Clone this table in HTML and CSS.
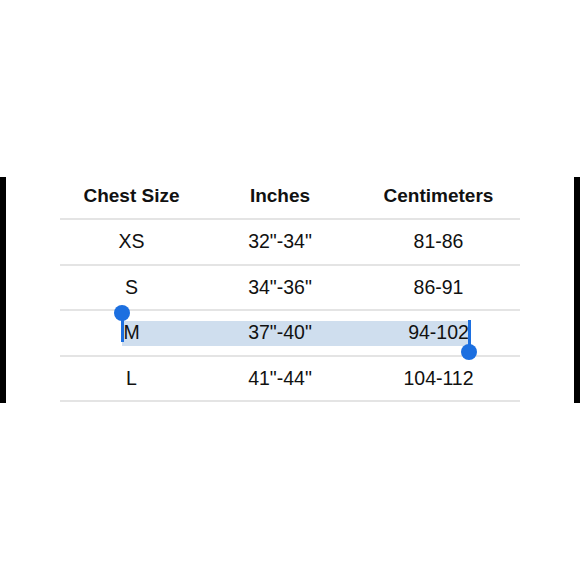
FILE: index.html
```html
<!DOCTYPE html>
<html>
<head>
<meta charset="utf-8">
<link rel="stylesheet" href="styles.css">
</head>
<body>
<div class="screen">
  <div class="bar"></div>
  <div class="chart">
    <div class="row head">
      <div class="cell">Chest Size</div>
      <div class="cell">Inches</div>
      <div class="cell">Centimeters</div>
    </div>
    <div class="row">
      <div class="cell">XS</div>
      <div class="cell">32"-34"</div>
      <div class="cell">81-86</div>
    </div>
    <div class="row">
      <div class="cell">S</div>
      <div class="cell">34"-36"</div>
      <div class="cell">86-91</div>
    </div>
    <div class="row selected">
      <div class="selection"></div>
      <div class="cell">M</div>
      <div class="cell">37"-40"</div>
      <div class="cell">94-102</div>
      <div class="handle start"><span class="knob"></span><span class="stem"></span></div>
      <div class="handle end"><span class="stem"></span><span class="knob"></span></div>
    </div>
    <div class="row">
      <div class="cell">L</div>
      <div class="cell">41"-44"</div>
      <div class="cell">104-112</div>
    </div>
  </div>
  <div class="bar"></div>
</div>
</body>
</html>
```
FILE: styles.css
```css
html, body {
  margin: 0;
  padding: 0;
  background: #ffffff;
}
body {
  width: 580px;
  height: 580px;
  overflow: hidden;
  font-family: "Liberation Sans", Arial, sans-serif;
  color: #111111;
}
.screen {
  display: flex;
  justify-content: space-between;
  align-items: flex-start;
  padding-top: 173px;
}
.bar {
  width: 6px;
  height: 226px;
  margin-top: 4px;
  background: #000000;
}
.chart {
  width: 460px;
  display: flex;
  flex-direction: column;
}
.row {
  display: grid;
  grid-template-columns: 143px 154px 163px;
  height: 45.5px;
  box-sizing: border-box;
  border-bottom: 2px solid #e4e4e4;
  font-size: 19.5px;
  position: relative;
}
.row.head {
  height: 47px;
  font-size: 19px;
  font-weight: bold;
}
.cell {
  display: flex;
  align-items: center;
  justify-content: center;
  position: relative;
  z-index: 1;
}
.selection {
  position: absolute;
  left: 62px;
  width: 346px;
  top: 10px;
  height: 25px;
  background: #cfdeee;
  z-index: 0;
}
.handle {
  position: absolute;
  display: flex;
  flex-direction: column;
  align-items: center;
  width: 16px;
  z-index: 2;
}
.handle.start {
  left: 54px;
  top: -6px;
}
.handle.end {
  left: 401px;
  top: 9px;
}
.knob {
  width: 16px;
  height: 16px;
  border-radius: 50%;
  background: #1c6fe0;
}
.stem {
  width: 3px;
  background: #1c6fe0;
}
.handle.start .stem {
  height: 27px;
  margin-top: -6px;
}
.handle.end .stem {
  height: 30px;
  margin-bottom: -6px;
}
```
